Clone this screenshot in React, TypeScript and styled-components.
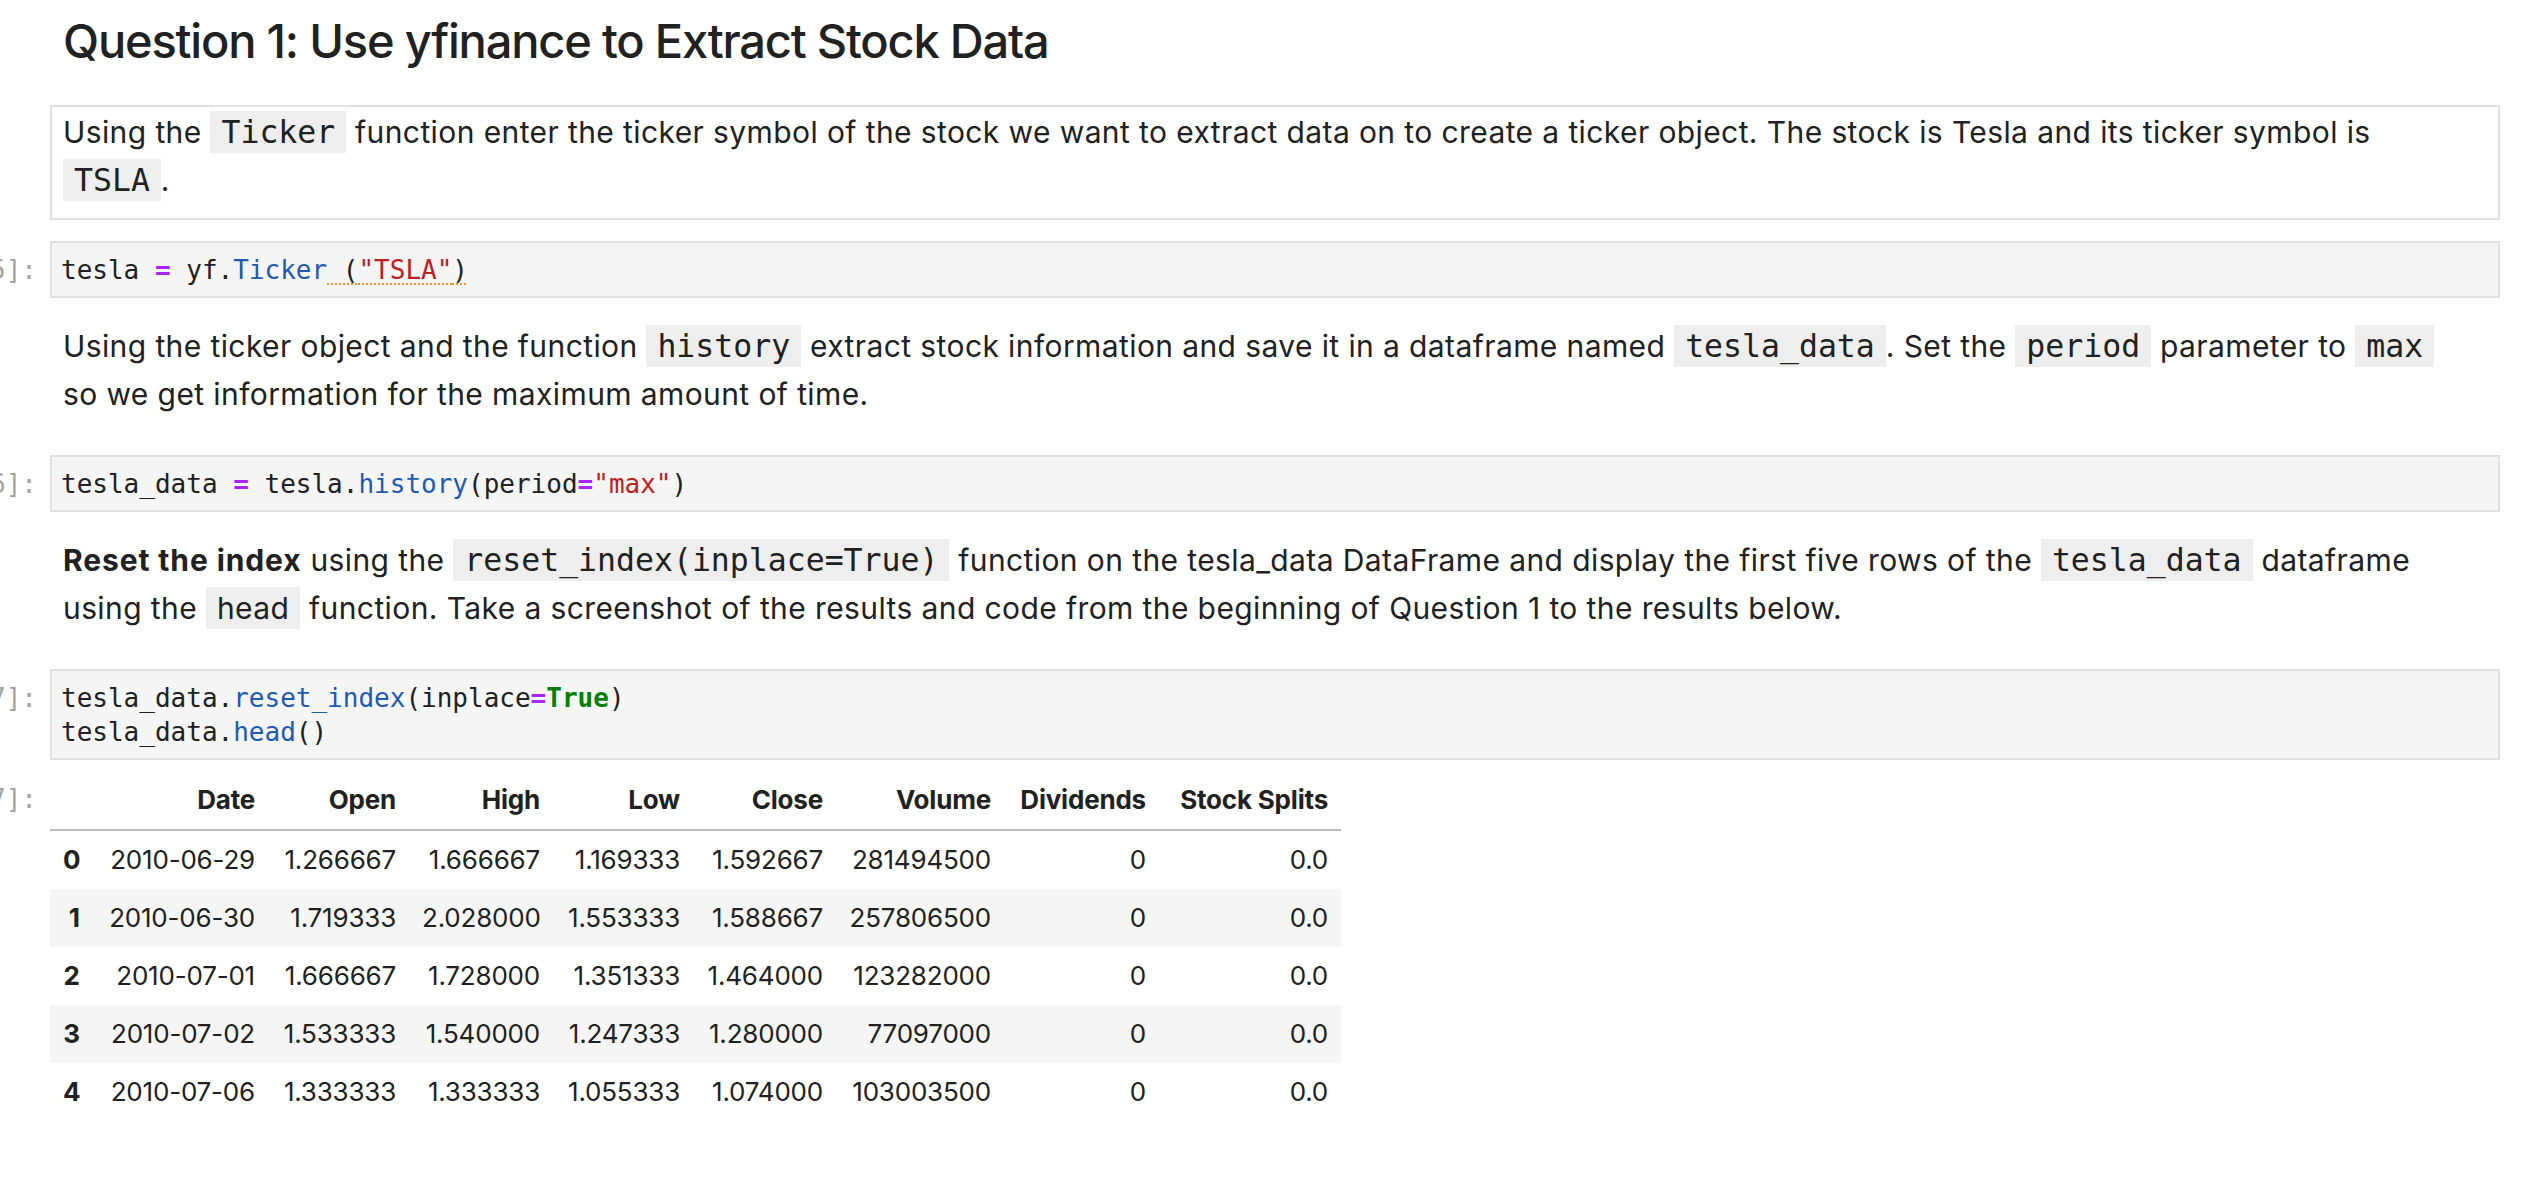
import React from "react";
import styled, { createGlobalStyle, css } from "styled-components";

const GlobalStyle = createGlobalStyle`
  html, body {
    margin: 0;
    padding: 0;
    background: #ffffff;
  }
  body {
    font-family: "Inter", "Noto Sans", sans-serif;
    color: #212121;
    overflow: hidden;
  }
`;

const MONO = `"DejaVu Sans Mono", "Liberation Mono", monospace`;

const Notebook = styled.main`
  display: flex;
  flex-direction: column;
  gap: 21px;
  padding: 12px 26px 0 0;
`;

const CellRow = styled.section`
  display: flex;
  align-items: flex-start;
`;

const Prompt = styled.div<{ $top: number }>`
  flex: 0 0 50px;
  width: 50px;
  display: flex;
  justify-content: flex-end;
  padding: ${(p) => p.$top}px 13px 0 0;
  box-sizing: border-box;
  font-family: ${MONO};
  font-size: 26px;
  line-height: 34px;
  color: #a3a3a3;
  white-space: nowrap;
`;

const CellBody = styled.div`
  flex: 1 1 auto;
  min-width: 0;
`;

const Heading = styled.h2`
  margin: 0 0 14px 0;
  padding-left: 13px;
  font-family: "Inter", sans-serif;
  font-size: 47px;
  line-height: 58px;
  font-weight: 500;
  letter-spacing: -1.2px;
  color: #212121;
`;

const MarkdownCell = styled.div<{ $selected?: boolean }>`
  border: 2px solid ${(p) => (p.$selected ? "#e0e0e0" : "transparent")};
  padding: 1px 38px 14px 11px;
`;

const Paragraph = styled.p`
  margin: 0;
  font-size: 30px;
  line-height: 48px;
  letter-spacing: 0.4px;
  color: #212121;
`;

const Strong = styled.strong`
  font-weight: 700;
  letter-spacing: 0.9px;
`;

const InlineCode = styled.code<{ $sans?: boolean }>`
  background: #eeeeee;
  padding: 3px 11px;
  letter-spacing: 0;
  ${(p) =>
    p.$sans
      ? css`
          font-family: "Inter", sans-serif;
          font-size: 30px;
          letter-spacing: 0.4px;
        `
      : css`
          font-family: ${MONO};
          font-size: 31.5px;
        `}
`;

const CodeCell = styled.div`
  display: flex;
  flex-direction: column;
  gap: 11px;
`;

const Editor = styled.pre`
  margin: 0;
  border: 2px solid #e0e0e0;
  background: #f5f5f5;
  padding: 10px 11px 9px 9px;
  font-family: ${MONO};
  font-size: 26px;
  line-height: 34px;
  color: #212121;
  white-space: pre;
`;

type TokKind = "op" | "prop" | "str" | "kw" | "lint";

const Tok = styled.span<{ $k: TokKind }>`
  ${(p) => p.$k === "op" && css`color: #aa22ff; font-weight: bold;`}
  ${(p) => p.$k === "prop" && css`color: #1f5ab0;`}
  ${(p) => p.$k === "str" && css`color: #ba2121;`}
  ${(p) => p.$k === "kw" && css`color: #008000; font-weight: bold;`}
  ${(p) =>
    p.$k === "lint" &&
    css`
      text-decoration: underline dotted #e8913a;
      text-decoration-thickness: 2px;
      text-underline-offset: 4px;
    `}
`;

const DataTable = styled.table`
  border-collapse: separate;
  border-spacing: 0;
  table-layout: fixed;
  width: 1291px;
  font-family: "Inter", sans-serif;
  font-size: 26px;
  color: #212121;
`;

const Col = styled.col<{ $w: number }>`
  width: ${(p) => p.$w}px;
`;

const HeadCell = styled.th`
  padding: 13px 13px;
  line-height: 32px;
  text-align: right;
  font-weight: 700;
  white-space: nowrap;
  border-bottom: 2px solid #bdbdbd;
  letter-spacing: -0.2px;
`;

const BodyRow = styled.tr`
  &:nth-child(even) {
    background: #f5f5f5;
  }
`;

const IndexCell = styled.th`
  padding: 13px 13px;
  line-height: 32px;
  text-align: right;
  font-weight: 700;
  white-space: nowrap;
`;

const DataCell = styled.td`
  padding: 13px 13px;
  line-height: 32px;
  text-align: right;
  white-space: nowrap;
  letter-spacing: -0.2px;
`;

const columns = [
  { name: "", w: 43 },
  { name: "Date", w: 175 },
  { name: "Open", w: 141 },
  { name: "High", w: 144 },
  { name: "Low", w: 140 },
  { name: "Close", w: 143 },
  { name: "Volume", w: 168 },
  { name: "Dividends", w: 155 },
  { name: "Stock Splits", w: 182 },
];

const rows = [
  ["0", "2010-06-29", "1.266667", "1.666667", "1.169333", "1.592667", "281494500", "0", "0.0"],
  ["1", "2010-06-30", "1.719333", "2.028000", "1.553333", "1.588667", "257806500", "0", "0.0"],
  ["2", "2010-07-01", "1.666667", "1.728000", "1.351333", "1.464000", "123282000", "0", "0.0"],
  ["3", "2010-07-02", "1.533333", "1.540000", "1.247333", "1.280000", "77097000", "0", "0.0"],
  ["4", "2010-07-06", "1.333333", "1.333333", "1.055333", "1.074000", "103003500", "0", "0.0"],
];

export default function App() {
  return (
    <>
      <GlobalStyle />
      <Notebook>
        <CellRow>
          <Prompt $top={0} />
          <CellBody>
            <Heading>Question 1: Use yfinance to Extract Stock Data</Heading>
          </CellBody>
        </CellRow>

        <CellRow>
          <Prompt $top={0} />
          <CellBody>
            <MarkdownCell $selected>
              <Paragraph>
                Using the <InlineCode>Ticker</InlineCode> function enter the ticker symbol of the
                stock we want to extract data on to create a ticker object. The stock is Tesla and
                its ticker symbol is <InlineCode>TSLA</InlineCode>.
              </Paragraph>
            </MarkdownCell>
          </CellBody>
        </CellRow>

        <CellRow>
          <Prompt $top={12}>[5]:</Prompt>
          <CellBody>
            <Editor>
              tesla <Tok $k="op">=</Tok> yf.<Tok $k="prop">Ticker</Tok>
              <Tok $k="lint">
                {" ("}
                <Tok $k="str">"TSLA"</Tok>)
              </Tok>
            </Editor>
          </CellBody>
        </CellRow>

        <CellRow>
          <Prompt $top={0} />
          <CellBody>
            <MarkdownCell>
              <Paragraph>
                Using the ticker object and the function <InlineCode>history</InlineCode> extract
                stock information and save it in a dataframe named{" "}
                <InlineCode>tesla_data</InlineCode>. Set the <InlineCode>period</InlineCode>{" "}
                parameter to <InlineCode>max</InlineCode> so we get information for the maximum
                amount of time.
              </Paragraph>
            </MarkdownCell>
          </CellBody>
        </CellRow>

        <CellRow>
          <Prompt $top={12}>[6]:</Prompt>
          <CellBody>
            <Editor>
              tesla_data <Tok $k="op">=</Tok> tesla.<Tok $k="prop">history</Tok>(period
              <Tok $k="op">=</Tok>
              <Tok $k="str">"max"</Tok>)
            </Editor>
          </CellBody>
        </CellRow>

        <CellRow>
          <Prompt $top={0} />
          <CellBody>
            <MarkdownCell>
              <Paragraph>
                <Strong>Reset the index</Strong> using the{" "}
                <InlineCode>reset_index(inplace=True)</InlineCode> function on the tesla_data
                DataFrame and display the first five rows of the{" "}
                <InlineCode>tesla_data</InlineCode> dataframe using the{" "}
                <InlineCode $sans>head</InlineCode> function. Take a screenshot of the results and
                code from the beginning of Question 1 to the results below.
              </Paragraph>
            </MarkdownCell>
          </CellBody>
        </CellRow>

        <CodeCell>
          <CellRow>
            <Prompt $top={12}>[7]:</Prompt>
            <CellBody>
              <Editor>
                tesla_data.<Tok $k="prop">reset_index</Tok>(inplace<Tok $k="op">=</Tok>
                <Tok $k="kw">True</Tok>)
                {"\n"}tesla_data.<Tok $k="prop">head</Tok>()
              </Editor>
            </CellBody>
          </CellRow>
          <CellRow>
            <Prompt $top={11}>[7]:</Prompt>
            <CellBody>
              <DataTable>
                <colgroup>
                  {columns.map((c, i) => (
                    <Col key={i} $w={c.w} />
                  ))}
                </colgroup>
                <thead>
                  <tr>
                    {columns.map((c, i) => (
                      <HeadCell key={i}>{c.name}</HeadCell>
                    ))}
                  </tr>
                </thead>
                <tbody>
                  {rows.map((r) => (
                    <BodyRow key={r[0]}>
                      <IndexCell>{r[0]}</IndexCell>
                      {r.slice(1).map((v, j) => (
                        <DataCell key={j}>{v}</DataCell>
                      ))}
                    </BodyRow>
                  ))}
                </tbody>
              </DataTable>
            </CellBody>
          </CellRow>
        </CodeCell>
      </Notebook>
    </>
  );
}
